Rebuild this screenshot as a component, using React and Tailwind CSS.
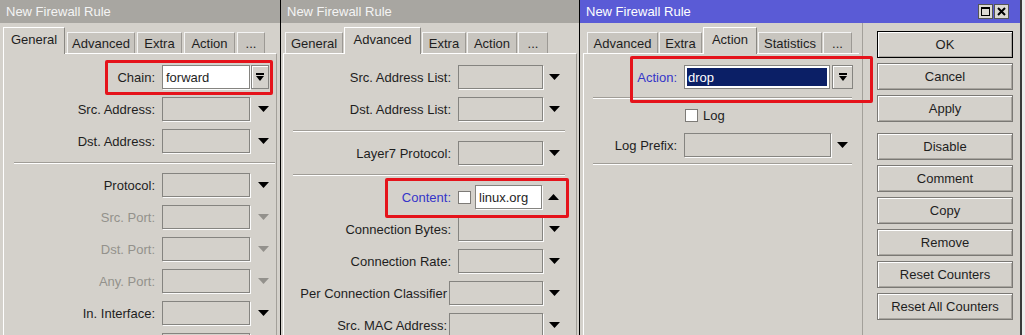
import React from 'react';

function DownArrow({ disabled }) {
  return (
    <svg width="11" height="6" viewBox="0 0 11 6" className="block">
      <polygon points="0,0 11,0 5.5,6" fill={disabled ? '#93918c' : '#000'} />
    </svg>
  );
}

function UpArrow() {
  return (
    <svg width="11" height="6" viewBox="0 0 11 6" className="block">
      <polygon points="0,6 11,6 5.5,0" fill="#000" />
    </svg>
  );
}

function DropBtn({ className = '' }) {
  return (
    <div className={`h-[24px] flex items-center justify-center border border-[#858480] shadow-[inset_1px_1px_0_#fff] ${className}`}>
      <svg width="8" height="9" viewBox="0 0 8 9" className="block">
        <rect x="0" y="0" width="8" height="2" fill="#000" />
        <polygon points="0,3 8,3 4,8" fill="#000" />
      </svg>
    </div>
  );
}

function Field({ className = '', children }) {
  return (
    <div className={`h-[24px] flex items-center border border-[#858480] shadow-[1px_1px_0_#fbfbfb] ${className}`}>
      {children}
    </div>
  );
}

function Checkbox({ className = '' }) {
  return <div className={`w-[13px] h-[13px] bg-white border border-[#7d7b77] ${className}`} />;
}

function TitleBar({ blue, children }) {
  return (
    <div
      className={`h-[23px] shrink-0 flex items-center pl-[6px] ${
        blue ? 'bg-[#5a5bd6] text-white' : 'bg-[#a8a6a1] text-[#f4f4f4]'
      }`}
    >
      New Firewall Rule
      {children}
    </div>
  );
}

function Tab({ active, className = '', children }) {
  if (active) {
    return (
      <div
        className={`relative z-10 -mb-px h-[27px] pb-[3px] flex items-center justify-center bg-[#d4d1cb] border-t border-l border-white border-r border-r-[#8a8883] ${className}`}
      >
        {children}
      </div>
    );
  }
  return (
    <div
      className={`h-[21px] flex items-center justify-center bg-[#c8c5bf] border-t border-l border-[#f4f4f4] border-r border-r-[#9c9994] ${className}`}
    >
      {children}
    </div>
  );
}

function Sep({ className = '', h = 'h-[12px]' }) {
  return (
    <div className={`${h} flex items-center ${className}`}>
      <div className="w-full border-t border-[#a09d97] border-b border-b-white" />
    </div>
  );
}

function Row({ label, labelClass, fieldClass, arrowClass, disabled, blue, children, box }) {
  return (
    <div className="relative h-[32px] flex items-center">
      <div
        className={`${labelClass} text-right whitespace-nowrap ${
          disabled ? 'text-[#93918c]' : blue ? 'text-[#3535c9]' : ''
        }`}
      >
        {label}
      </div>
      {children ?? (
        <>
          <Field className={fieldClass} />
          <div className={`${arrowClass} flex justify-center`}>
            <DownArrow disabled={disabled} />
          </div>
        </>
      )}
      {box}
    </div>
  );
}

function Btn({ def, className = '', children }) {
  return (
    <div
      className={`h-[27px] w-[136px] shrink-0 flex items-center justify-center border ${
        def ? 'border-black' : 'border-[#7a7874]'
      } shadow-[inset_1px_1px_0_#fff,inset_-1px_-1px_0_#a9a6a0] ${className}`}
    >
      {children}
    </div>
  );
}

const RedBox = ({ className }) => (
  <div className={`absolute z-20 border-[3px] border-[#e5131b] rounded-[2px] pointer-events-none ${className}`} />
);

export default function App() {
  const p1 = { labelClass: 'w-[151px]', fieldClass: 'ml-[7px] w-[88px]', arrowClass: 'ml-[8px] w-[11px]' };
  const p2 = { labelClass: 'w-[167px]', fieldClass: 'ml-[7px] w-[85px]', arrowClass: 'ml-[6px] w-[11px]' };
  const p2b = { labelClass: 'w-[163px]', fieldClass: 'ml-[2px] w-[94px]', arrowClass: 'ml-[6px] w-[11px]' };

  return (
    <div className="w-[1025px] h-[335px] overflow-hidden flex bg-[#d4d1cb] font-['Liberation_Sans',Arial,sans-serif] text-[13px] text-[#1e1e1e] leading-none">
      {/* General tab */}
      <div className="w-[280px] shrink-0 flex flex-col">
        <TitleBar />
        <div className="h-[30px] shrink-0 flex items-end gap-[2px] pl-[3px]">
          <Tab active className="w-[62px]">General</Tab>
          <Tab className="w-[68px]">Advanced</Tab>
          <Tab className="w-[45px]">Extra</Tab>
          <Tab className="w-[51px]">Action</Tab>
          <Tab className="w-[28px]">...</Tab>
        </div>
        <div className="flex-1 mx-[3px] pt-[7px] border-t border-l border-white border-r border-r-[#a3a09a]">
          <Row
            label="Chain:"
            labelClass="w-[151px]"
            box={<RedBox className="left-[101px] top-[-1px] w-[168px] h-[35px]" />}
          >
            <Field className="ml-[7px] w-[88px] bg-white pl-[3px]">forward</Field>
            <DropBtn className="ml-[1px] w-[18px]" />
          </Row>
          <Row label="Src. Address:" {...p1} />
          <Row label="Dst. Address:" {...p1} />
          <Sep className="ml-[10px] mr-[1px]" />
          <Row label="Protocol:" {...p1} />
          <Row label="Src. Port:" disabled {...p1} />
          <Row label="Dst. Port:" disabled {...p1} />
          <Row label="Any. Port:" disabled {...p1} />
          <Row label="In. Interface:" {...p1} />
          <Row label="" {...p1} />
        </div>
      </div>

      <div className="w-px shrink-0 bg-black" />

      {/* Advanced tab */}
      <div className="w-[298px] shrink-0 flex flex-col">
        <TitleBar />
        <div className="h-[30px] shrink-0 flex items-end gap-[1px] pl-[4px]">
          <Tab className="w-[58px]">General</Tab>
          <Tab active className="w-[77px]">Advanced</Tab>
          <Tab className="w-[44px]">Extra</Tab>
          <Tab className="w-[50px]">Action</Tab>
          <Tab className="w-[30px]">...</Tab>
        </div>
        <div className="flex-1 mx-[2px] pt-[7px] border-t border-l border-white border-r border-r-[#a3a09a]">
          <Row label="Src. Address List:" {...p2} />
          <Row label="Dst. Address List:" {...p2} />
          <Sep className="ml-[9px] mr-[11px]" />
          <Row label="Layer7 Protocol:" {...p2} />
          <Sep className="ml-[9px] mr-[11px]" />
          <Row
            label="Content:"
            blue
            labelClass="w-[167px]"
            box={<RedBox className="left-[101px] top-[-3px] w-[184px] h-[40px]" />}
          >
            <Checkbox className="ml-[7px]" />
            <Field className="ml-[4px] w-[67px] bg-white pl-[3px]">linux.org</Field>
            <div className="ml-[6px] w-[11px] flex justify-center">
              <UpArrow />
            </div>
          </Row>
          <Row label="Connection Bytes:" {...p2} />
          <Row label="Connection Rate:" {...p2} />
          <Row label="Per Connection Classifier" {...p2b} />
          <Row label="Src. MAC Address:" {...p2b} />
        </div>
      </div>

      <div className="w-px shrink-0 bg-black" />

      {/* Action tab */}
      <div className="w-[442px] shrink-0 flex flex-col border-r-2 border-[#3a3a3a]">
        <TitleBar blue>
          <div className="ml-auto mr-[11px] flex gap-[1px]">
            <div className="w-[15px] h-[15px] bg-[#dcd9d3] border border-[#555] flex items-center justify-center">
              <div className="w-[9px] h-[9px] border border-black border-t-2" />
            </div>
            <div className="w-[15px] h-[15px] bg-[#dcd9d3] border border-[#555] flex items-center justify-center">
              <svg width="9" height="9" viewBox="0 0 9 9" className="block">
                <path d="M1 1 L8 8 M8 1 L1 8" stroke="#000" strokeWidth="2" />
              </svg>
            </div>
          </div>
        </TitleBar>
        <div className="flex-1 flex">
          <div className="w-[283px] shrink-0 flex flex-col border-r border-[#a3a09a]">
            <div className="h-[30px] shrink-0 flex items-end gap-[1px] pl-[7px]">
              <Tab className="w-[71px]">Advanced</Tab>
              <Tab className="w-[43px]">Extra</Tab>
              <Tab active className="w-[54px]">Action</Tab>
              <Tab className="w-[64px]">Statistics</Tab>
              <Tab className="w-[29px]">...</Tab>
            </div>
            <div className="flex-1 mx-[3px] pt-[7px] border-t border-l border-white">
              <Row
                label="Action:"
                blue
                labelClass="w-[93px]"
                box={<RedBox className="left-[46px] top-[-5px] w-[243px] h-[47px]" />}
              >
                <div className="ml-[7px] w-[146px] h-[24px] border border-[#858480] bg-white p-[2px]">
                  <div className="h-full bg-[#0b1f66] text-white flex items-center pl-[1px]">drop</div>
                </div>
                <DropBtn className="ml-[2px] w-[21px]" />
              </Row>
              <Sep h="h-[10px]" className="ml-[9px] mr-[7px]" />
              <div className="h-[24px] flex items-center">
                <Checkbox className="ml-[101px]" />
                <span className="ml-[5px]">Log</span>
              </div>
              <div className="mt-[2px]">
                <Row
                  label="Log Prefix:"
                  labelClass="w-[93px]"
                  fieldClass="ml-[7px] w-[147px]"
                  arrowClass="ml-[6px] w-[11px]"
                />
              </div>
              <Sep h="h-[6px]" className="ml-[9px] mr-[7px]" />
            </div>
          </div>
          <div className="flex-1 flex flex-col gap-[5px] pt-[8px] pl-[14px]">
            <Btn def>OK</Btn>
            <Btn>Cancel</Btn>
            <Btn>Apply</Btn>
            <Btn className="mt-[6px]">Disable</Btn>
            <Btn>Comment</Btn>
            <Btn>Copy</Btn>
            <Btn>Remove</Btn>
            <Btn>Reset Counters</Btn>
            <Btn>Reset All Counters</Btn>
          </div>
        </div>
      </div>
      <div className="flex-1 bg-[#ececec]" />
    </div>
  );
}
